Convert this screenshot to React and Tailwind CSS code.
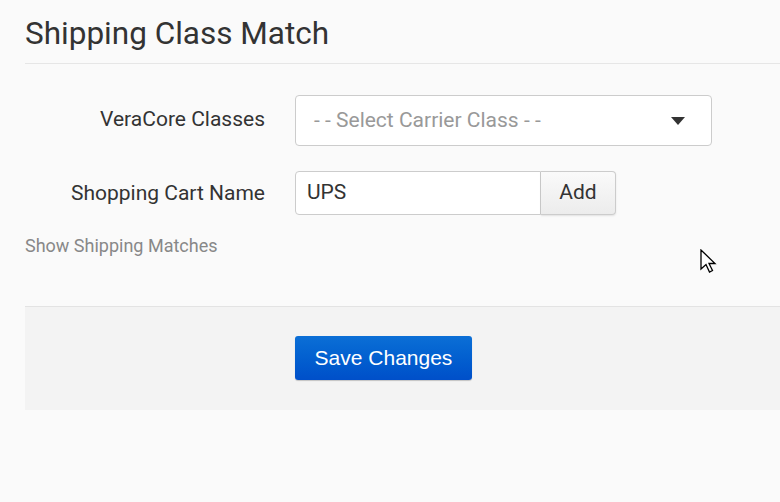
export default function App() {
  return (
    <div className="relative w-[780px] h-[502px] overflow-hidden bg-[#fafafa] font-['Roboto',sans-serif]">
      <div className="pl-[25px]">
        <div className="h-[64px] border-b border-[#e6e6e6] flex items-center">
          <h1 className="text-[31.5px] leading-none text-[#333] mt-[5px] font-normal">Shipping Class Match</h1>
        </div>
        <div className="pt-[31px] flex flex-col gap-[25px]">
          <div className="flex items-center">
            <label className="w-[240px] text-right text-[21px] leading-none text-[#333] -mt-[3px]">VeraCore Classes</label>
            <div className="ml-[30px] w-[417px] h-[51px] bg-white border border-[#ccc] rounded-[4px] flex items-center justify-between pl-[18px] pr-[26px]">
              <span className="text-[21px] leading-none text-[#999]">- - Select Carrier Class - -</span>
              <svg width="14" height="8" viewBox="0 0 14 8"><path d="M0 0 L14 0 L7 8 Z" fill="#333" /></svg>
            </div>
          </div>
          <div className="flex items-center">
            <label className="w-[240px] text-right text-[21px] leading-none text-[#333]">Shopping Cart Name</label>
            <div className="ml-[30px] flex h-[44px]">
              <div className="w-[246px] bg-white border border-[#ccc] rounded-l-[4px] flex items-center pl-[11px] text-[21px] text-[#333]">UPS</div>
              <div className="w-[75px] border border-l-0 border-[#ccc] rounded-r-[4px] bg-gradient-to-b from-[#fafafa] to-[#ececec] flex items-center justify-center text-[21px] text-[#333] shadow-[0_1px_2px_rgba(0,0,0,0.1)]">Add</div>
            </div>
          </div>
        </div>
        <div className="mt-[22px] text-[18px] leading-none text-[#888]">Show Shipping Matches</div>
        <div className="mt-[51px] h-[104px] border-t border-[#e3e3e3] bg-[#f3f3f3] pt-[29px] pl-[270px]">
          <button className="w-[177px] h-[44px] rounded-[3px] bg-gradient-to-b from-[#0c6fd6] to-[#004fc9] text-white text-[21px] font-['Liberation_Sans',sans-serif] shadow-[0_1px_1px_rgba(0,0,0,0.2)]">Save Changes</button>
        </div>
      </div>
      <svg className="absolute left-[700px] top-[249px]" width="20" height="28" viewBox="0 0 20 28">
        <path d="M1 1 L1 20 L6 15.5 L9.5 23 L12.5 21.5 L9 14.5 L15 14.5 Z" fill="white" stroke="black" strokeWidth="1.3" strokeLinejoin="miter" />
      </svg>
    </div>
  );
}
